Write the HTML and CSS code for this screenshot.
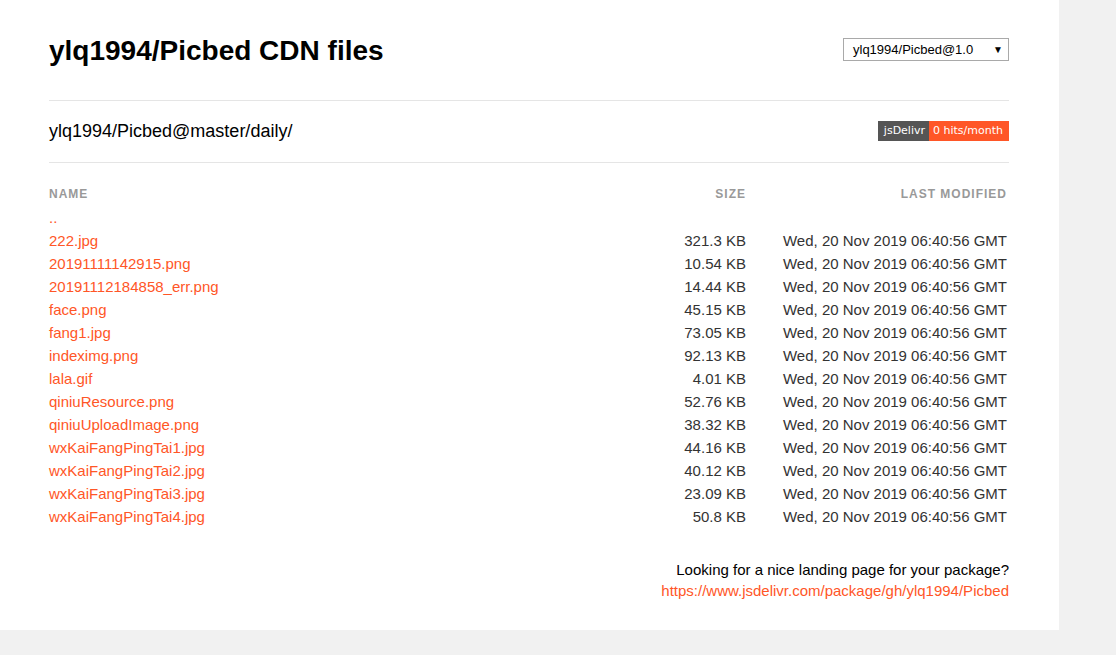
FILE: index.html
```html
<!DOCTYPE html>
<html>
<head>
<meta charset="utf-8">
<link rel="stylesheet" href="styles.css">
</head>
<body>
<div class="page">
  <header class="top">
    <h1 class="title">ylq1994/Picbed CDN files</h1>
    <div class="select">
      <span>ylq1994/Picbed@1.0</span>
      <span class="caret">▼</span>
    </div>
  </header>
  <hr class="rule">
  <div class="pathbar">
    <span class="path">ylq1994/Picbed@master/daily/</span>
    <span class="badge"><span class="b-left">jsDelivr</span><span class="b-right">0 hits/month</span></span>
  </div>
  <hr class="rule rule2">
  <table class="files">
    <thead>
      <tr><th class="c-name">Name</th><th class="c-size">Size</th><th class="c-date">Last modified</th></tr>
    </thead>
    <tbody>
      <tr><td class="c-name"><a href="#">..</a></td><td class="c-size"></td><td class="c-date"></td></tr>
      <tr><td class="c-name"><a href="#">222.jpg</a></td><td class="c-size">321.3 KB</td><td class="c-date">Wed, 20 Nov 2019 06:40:56 GMT</td></tr>
      <tr><td class="c-name"><a href="#">20191111142915.png</a></td><td class="c-size">10.54 KB</td><td class="c-date">Wed, 20 Nov 2019 06:40:56 GMT</td></tr>
      <tr><td class="c-name"><a href="#">20191112184858_err.png</a></td><td class="c-size">14.44 KB</td><td class="c-date">Wed, 20 Nov 2019 06:40:56 GMT</td></tr>
      <tr><td class="c-name"><a href="#">face.png</a></td><td class="c-size">45.15 KB</td><td class="c-date">Wed, 20 Nov 2019 06:40:56 GMT</td></tr>
      <tr><td class="c-name"><a href="#">fang1.jpg</a></td><td class="c-size">73.05 KB</td><td class="c-date">Wed, 20 Nov 2019 06:40:56 GMT</td></tr>
      <tr><td class="c-name"><a href="#">indeximg.png</a></td><td class="c-size">92.13 KB</td><td class="c-date">Wed, 20 Nov 2019 06:40:56 GMT</td></tr>
      <tr><td class="c-name"><a href="#">lala.gif</a></td><td class="c-size">4.01 KB</td><td class="c-date">Wed, 20 Nov 2019 06:40:56 GMT</td></tr>
      <tr><td class="c-name"><a href="#">qiniuResource.png</a></td><td class="c-size">52.76 KB</td><td class="c-date">Wed, 20 Nov 2019 06:40:56 GMT</td></tr>
      <tr><td class="c-name"><a href="#">qiniuUploadImage.png</a></td><td class="c-size">38.32 KB</td><td class="c-date">Wed, 20 Nov 2019 06:40:56 GMT</td></tr>
      <tr><td class="c-name"><a href="#">wxKaiFangPingTai1.jpg</a></td><td class="c-size">44.16 KB</td><td class="c-date">Wed, 20 Nov 2019 06:40:56 GMT</td></tr>
      <tr><td class="c-name"><a href="#">wxKaiFangPingTai2.jpg</a></td><td class="c-size">40.12 KB</td><td class="c-date">Wed, 20 Nov 2019 06:40:56 GMT</td></tr>
      <tr><td class="c-name"><a href="#">wxKaiFangPingTai3.jpg</a></td><td class="c-size">23.09 KB</td><td class="c-date">Wed, 20 Nov 2019 06:40:56 GMT</td></tr>
      <tr><td class="c-name"><a href="#">wxKaiFangPingTai4.jpg</a></td><td class="c-size">50.8 KB</td><td class="c-date">Wed, 20 Nov 2019 06:40:56 GMT</td></tr>
    </tbody>
  </table>
  <footer class="foot">
    <p>Looking for a nice landing page for your package?</p>
    <a href="#">https://www.jsdelivr.com/package/gh/ylq1994/Picbed</a>
  </footer>
</div>
</body>
</html>
```
FILE: styles.css
```css
html, body {
  margin: 0;
  padding: 0;
}
body {
  background: #f1f1f1;
  font-family: "Liberation Sans", Arial, sans-serif;
  color: #333;
}
.page {
  width: 1059px;
  height: 630px;
  box-sizing: border-box;
  padding: 0 50px 0 49px;
  background: #fff;
}
.top {
  display: flex;
  justify-content: space-between;
  align-items: flex-start;
  padding-top: 34px;
}
.title {
  margin: 0;
  font-size: 28px;
  line-height: 34px;
  font-weight: bold;
  color: #000;
}
.select {
  margin-top: 4px;
  width: 166px;
  height: 23px;
  box-sizing: border-box;
  border: 1px solid #a9a9a9;
  display: flex;
  align-items: center;
  justify-content: space-between;
  padding: 0 5px 0 9px;
  font-size: 13px;
  color: #000;
}
.caret {
  font-size: 10px;
}
.rule {
  border: 0;
  border-top: 1px solid #e5e5e5;
  margin: 32px 0 0 0;
}
.pathbar {
  display: flex;
  justify-content: space-between;
  align-items: center;
  height: 60px;
}
.path {
  font-size: 18px;
  color: #000;
}
.badge {
  display: flex;
  font-family: "DejaVu Sans", Verdana, sans-serif;
  font-size: 11px;
  line-height: 20px;
  color: #fff;
}
.b-left {
  background: #555;
  padding: 0 4px 0 6px;
}
.b-right {
  background: #ff5627;
  padding: 0 6px 0 4px;
}
.rule2 {
  margin: 1px 0 0 0;
}
.files {
  width: 100%;
  border-collapse: collapse;
  margin-top: 23px;
}
.files th {
  font-size: 12px;
  font-weight: bold;
  text-transform: uppercase;
  letter-spacing: 1px;
  color: #999;
  padding: 0 0 4px 0;
  line-height: 16px;
}
.files td {
  font-size: 15px;
  line-height: 23px;
  padding: 0;
  color: #333;
}
.c-name {
  text-align: left;
}
.c-size {
  text-align: right;
  width: 110px;
}
.c-date {
  text-align: right;
  width: 261px;
  padding-right: 2px !important;
}
.files a, .foot a {
  color: #ff5627;
  text-decoration: none;
}
.foot {
  text-align: right;
  margin-top: 31px;
  font-size: 15px;
  line-height: 21px;
  color: #000;
}
.foot p {
  margin: 0;
}
```
